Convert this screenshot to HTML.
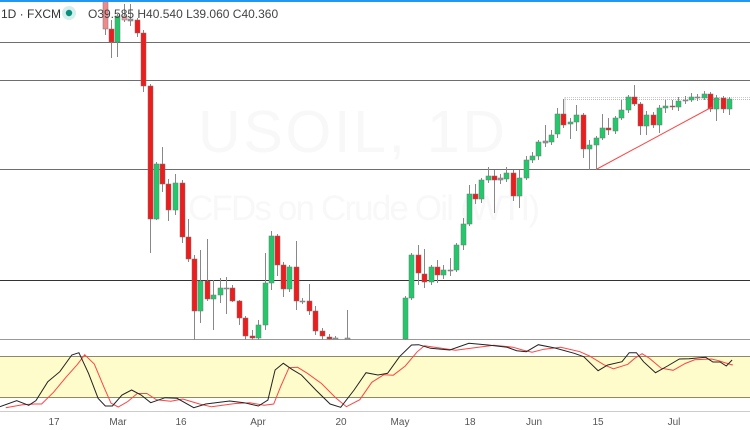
<!DOCTYPE html>
<html><head><meta charset="utf-8"><style>
html,body{margin:0;padding:0;background:#fff;width:750px;height:430px;overflow:hidden}
svg{display:block;font-family:"Liberation Sans",sans-serif}
</style></head><body>
<svg id="s" width="750" height="430" viewBox="0 0 750 430" xmlns="http://www.w3.org/2000/svg">
<text x="198" y="152" font-size="59" fill="#f8f8f8" textLength="307">USOIL, 1D</text>
<text x="188" y="220" font-size="35" fill="#f8f8f8" textLength="352">CFDs on Crude Oil (WTI)</text>
<g stroke="#6e6e6e" stroke-width="1">
<line x1="0" y1="42.5" x2="750" y2="42.5"/>
<line x1="0" y1="80.5" x2="750" y2="80.5"/>
<line x1="0" y1="169.5" x2="750" y2="169.5"/>
<line x1="0" y1="280.5" x2="750" y2="280.5" stroke="#333"/>
<line x1="0" y1="339.5" x2="750" y2="339.5" stroke="#999"/>
</g>
<line x1="565" y1="99.5" x2="750" y2="99.5" stroke="#bbb" stroke-dasharray="1,1"/>
<line x1="565" y1="97.5" x2="750" y2="97.5" stroke="#ccc" stroke-dasharray="1,1"/>
<line x1="565" y1="97" x2="565" y2="115" stroke="#ccc"/>
<g id="c"></g>
<line x1="597" y1="169" x2="712" y2="107" stroke="#f44" stroke-width="1"/>
<rect x="0" y="340" width="750" height="71" fill="#fff"/>
<rect x="0" y="356" width="750" height="41" fill="#fffccc"/>
<line x1="0" y1="356.5" x2="750" y2="356.5" stroke="#8a8a6a"/>
<line x1="0" y1="397.5" x2="750" y2="397.5" stroke="#8a8a6a"/>
<polyline id="rl" fill="none" stroke="#f44" stroke-width="1"/>
<polyline id="bl" fill="none" stroke="#222" stroke-width="1"/>
<line x1="0" y1="411.5" x2="750" y2="411.5" stroke="#ccc"/>
<rect x="0" y="0" width="750" height="2" fill="#2196f3"/>
<text x="1" y="18" font-size="12" fill="#333">1D · FXCM</text>
<circle cx="69" cy="13" r="7" fill="#d6efec"/>
<circle cx="69" cy="13" r="3.2" fill="#0a8f7f"/>
<text x="88" y="18" font-size="12" fill="#444">O39.585  H40.540  L39.060  C40.360</text>
<g font-size="10" fill="#555" text-anchor="middle">
<text x="54" y="425">17</text><text x="118" y="425">Mar</text><text x="181" y="425">16</text>
<text x="258" y="425">Apr</text><text x="341" y="425">20</text><text x="400" y="425">May</text>
<text x="470" y="425">18</text><text x="534" y="425">Jun</text><text x="598" y="425">15</text>
<text x="674" y="425">Jul</text>
</g>
</svg>
<script>
var G="#22c96b",R="#ee1c1c";
var d=[
[105,0,29,"#f08a8a",0,35],[111,29,42,R,20,58],[117,16,42,G,14,57],[124,16,20,"#f4a0a0",4,22],[130,19,21,"#999",4,26],
[137,20,33,R,18,37],[143,33,86,R,30,92],[150,86,219,R,84,253],[156,164,219,G,162,220],[162,164,184,R,147,192],
[168,184,210,R,179,221],[175,183,210,G,174,215],[182,183,237,R,180,243],[188,237,259,R,219,262],[194,259,311,R,255,340],
[200,281,311,G,250,323],[207,281,299,R,239,301],[213,295,299,G,280,330],[220,288,295,G,278,303],[226,288,289,"#999",277,314],
[232,288,301,R,285,302],[239,301,318,R,300,325],[245,318,336,R,316,340],[252,336,338,R,330,340],[258,325,338,G,320,340],
[265,283,325,G,253,330],[271,236,283,G,231,290],[277,236,265,R,234,276],[283,265,289,R,262,297],[289,267,289,G,265,292],
[296,267,301,R,241,310],[302,301,302,"#999",298,304],[309,301,311,R,284,315],[315,311,331,R,306,335],[322,331,336,R,328,340],
[329,337,339,R,334,340],[335,338,340,"#999",336,340],[347,338,340,"#999",310,340],
[405,298,339,G,296,340],[411,255,298,G,253,300],[418,255,273,R,245,285],[424,274,282,R,249,288],[431,267,282,G,265,285],
[437,267,275,R,260,283],[443,270,275,G,265,279],[450,270,271,"#999",258,276],[456,245,270,G,243,272],[463,224,245,G,218,250],
[469,194,224,G,185,226],[475,194,199,R,184,204],[481,180,199,G,178,203],[488,176,180,G,167,183],[494,176,180,R,170,213],
[500,178,180,"#999",174,184],[506,173,179,G,167,182],[513,173,196,R,170,201],[519,178,196,G,170,208],[526,160,178,G,156,180],
[532,156,160,G,152,163],[538,142,156,G,140,160],[545,141,143,"#999",125,147],[551,135,142,G,130,145],[557,114,134,G,108,138],
[563,114,125,R,99,128],[570,122,124,G,118,139],[576,115,122,G,105,131],[583,115,149,R,113,158],[589,145,149,G,140,170],
[596,138,145,G,136,170],[602,128,138,G,114,140],[608,128,130,R,118,135],[615,118,131,G,116,134],[621,110,118,G,100,120],
[628,97,110,G,95,113],[634,97,104,R,85,106],[640,104,126,R,102,135],[646,115,126,G,111,135],[653,115,125,R,112,128],
[659,108,125,G,105,133],[665,106,108,G,100,113],[672,106,107,R,100,110],[678,101,107,G,97,111],[685,100,101,"#999",96,104],
[691,97,100,G,93,102],[697,97,98,"#999",94,101],[704,94,98,G,91,100],[710,94,109,R,92,112],[716,98,109,G,95,121],
[723,98,109,R,96,113],[729,99,109,G,97,115]];
var h="";
d.forEach(function(c){var x=c[0];
h+='<line x1="'+(x+0.5)+'" y1="'+c[4]+'" x2="'+(x+0.5)+'" y2="'+c[5]+'" stroke="#888" stroke-width="1"/>';
h+='<rect x="'+(x-2)+'" y="'+c[1]+'" width="5" height="'+Math.max(1,c[2]-c[1])+'" fill="'+c[3]+'" stroke="#777" stroke-width="0.5"/>';});
document.getElementById("c").innerHTML=h;
var b=[[0,230],[35,212],[60,226],[75,212],[100,155],[125,125],[150,75],[165,68],[185,130],[205,205],[220,228],[235,228],[255,195],[275,180],[295,195],[315,218],[345,203],[370,205],[405,233],[430,222],[480,213],[510,218],[540,228],[560,210],[575,120],[592,100],[610,118],[630,135],[660,180],[690,222],[712,232],[740,180],[765,128],[790,135],[810,130],[835,80],[860,45],[875,44],[900,55],[940,60],[980,40],[1020,45],[1060,52],[1080,62],[1100,65],[1125,44],[1160,54],[1200,70],[1220,80],[1250,122],[1270,105],[1300,95],[1315,68],[1330,68],[1345,95],[1370,128],[1395,108],[1420,87],[1440,86],[1475,82],[1490,96],[1505,96],[1518,108],[1530,90]];
var bp=b.map(function(p){return (p[0]/2.09).toFixed(1)+","+(330+p[1]/3).toFixed(1)}).join(" ");
var rp=[];for(var i=0;i<b.length;i++){var y=b[i][1];if(i>0)y=(b[i][1]+b[i-1][1])/2;var x=b[i][0]+12;if(i==b.length-1)x=b[i][0];rp.push((x/2.09).toFixed(1)+","+(330+y/3+1).toFixed(1));}
document.getElementById("bl").setAttribute("points",bp);
document.getElementById("rl").setAttribute("points",rp.join(" "));
</script>
</body></html>
